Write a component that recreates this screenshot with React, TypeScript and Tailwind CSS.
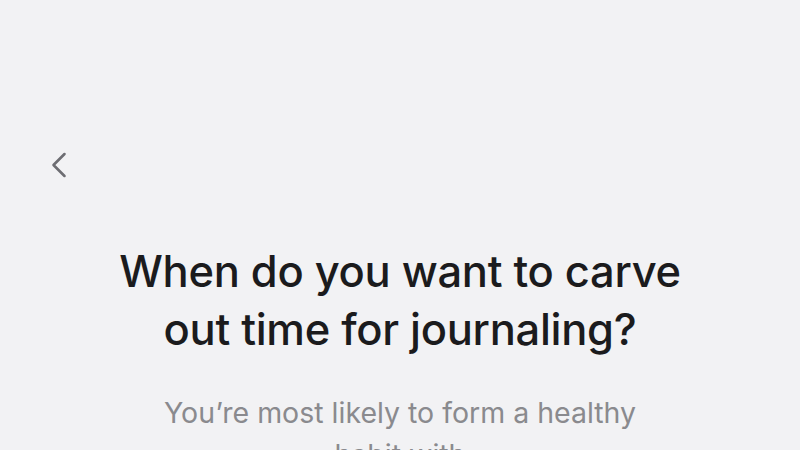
import { ChevronLeft } from 'lucide-react';

export default function App() {
    return (
        <div className="w-[800px] h-[450px] overflow-hidden bg-[#f2f2f4] font-['Inter',sans-serif]">
            <div className="pt-[143px] pl-[37px]">
                <button className="w-11 h-11 flex items-center justify-center text-[#6d6d72]">
                    <ChevronLeft size={44} strokeWidth={1.4} />
                </button>
            </div>
            <div className="mt-[55px] flex flex-col items-center text-center px-16">
                <h1 className="text-[43.5px] leading-[58px] font-medium tracking-[-0.3px] text-[#1b1b1d]">
                    When do you want to carve
                    <br />
                    out time for journaling?
                </h1>
                <p className="mt-[34px] max-w-[500px] text-[28.5px] leading-[42px] text-[#8a8a8e]">
                    You’re most likely to form a healthy
                    <br />
                    habit with
                </p>
            </div>
        </div>
    );
}
